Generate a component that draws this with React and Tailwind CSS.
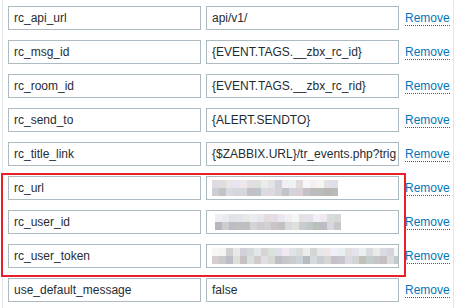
import React from "react";

// Macro rows of a media type parameter table
const rows = [
  { name: "rc_api_url", value: "api/v1/" },
  { name: "rc_msg_id", value: "{EVENT.TAGS.__zbx_rc_id}" },
  { name: "rc_room_id", value: "{EVENT.TAGS.__zbx_rc_rid}" },
  { name: "rc_send_to", value: "{ALERT.SENDTO}" },
  { name: "rc_title_link", value: "{$ZABBIX.URL}/tr_events.php?trig" },
  { name: "rc_url", blur: { cols: 18, offset: 0, seed: 3 } },
  { name: "rc_user_id", blur: { cols: 18, offset: 3, seed: 11 } },
  { name: "rc_user_token", blur: { cols: 27, offset: 0, seed: 29 } },
  { name: "use_default_message", value: "false" },
];

// Small seeded generator so the pixelated blocks stay the same on every render
function makeRand(seed) {
  let s = seed * 9301 + 49297;
  return () => {
    s = (s * 9301 + 49297) % 233280;
    return s / 233280;
  };
}

function blockColor(rand, dark) {
  const base = dark ? 185 : 212;
  const spread = dark ? 40 : 34;
  const l = base + Math.floor(rand() * spread);
  const r = l + Math.floor(rand() * 10 - 5);
  const g = l + Math.floor(rand() * 10 - 5);
  const b = l + Math.floor(rand() * 14 - 4);
  const c = (v) => Math.max(0, Math.min(255, v));
  return `rgb(${c(r)},${c(g)},${c(b)})`;
}

function Pixelated({ cols, offset, seed }) {
  const rand = makeRand(seed);
  const top = Array.from({ length: cols }, () => blockColor(rand, false));
  const bottom = Array.from({ length: cols }, () => blockColor(rand, true));
  return (
    <div className="flex flex-col" style={{ marginLeft: offset }}>
      <div className="flex">
        {top.map((c, i) => (
          <div key={i} className="w-[7px] h-[8px]" style={{ backgroundColor: c }} />
        ))}
      </div>
      <div className="flex">
        {bottom.map((c, i) => (
          <div key={i} className="w-[7px] h-[8px]" style={{ backgroundColor: c }} />
        ))}
      </div>
    </div>
  );
}

function Field({ children }) {
  return (
    <div className="w-[193px] h-[24px] shrink-0 border border-[#acbbc2] bg-white px-[5px] flex items-center overflow-hidden whitespace-nowrap text-[#1f2c33]">
      {children}
    </div>
  );
}

export default function App() {
  return (
    <div className="relative w-[462px] h-[308px] bg-white overflow-hidden font-['Liberation_Sans',Arial,sans-serif] text-[12px]">
      <div className="ml-[2px] w-[452px] h-full border-x border-[#e4e6e8] pt-[6px] pl-[5px]">
        <div className="flex flex-col gap-[10px]">
          {rows.map((r) => (
            <div key={r.name} className="flex items-center h-[24px]">
              <Field>{r.name}</Field>
              <div className="ml-[5px]">
                <Field>
                  {r.blur ? <Pixelated {...r.blur} /> : r.value}
                </Field>
              </div>
              <a className="ml-[6px] text-[#0275b8] leading-[14px] border-b border-dotted border-[#0275b8] cursor-pointer">
                Remove
              </a>
            </div>
          ))}
        </div>
      </div>
      {/* annotation frame over the secret rows */}
      <div className="absolute left-[1px] top-[173px] w-[405px] h-[104px] border-2 border-[#e8202a]" />
    </div>
  );
}
